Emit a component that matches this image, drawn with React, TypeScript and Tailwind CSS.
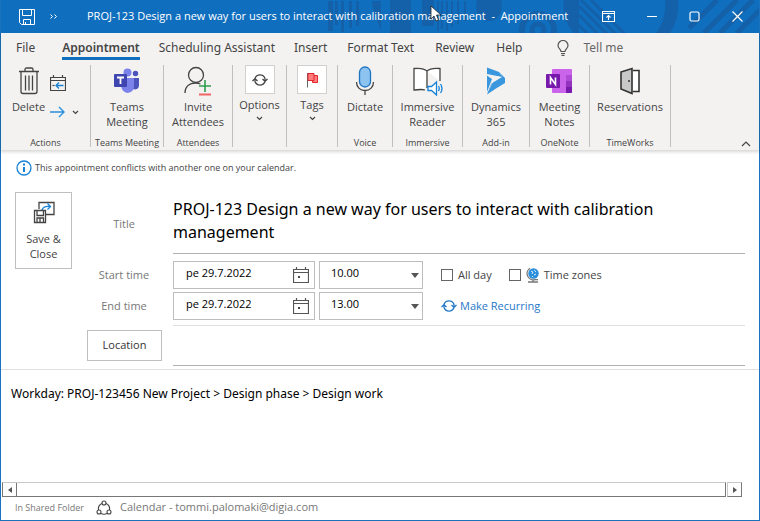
import type { ReactNode } from "react";

const stroke = { fill: "none", stroke: "#444", strokeWidth: 1.3 };

function TitlePattern() {
  return (
    <svg className="absolute right-0 top-0 h-full w-[440px]" viewBox="320 0 440 33" aria-hidden="true">
      <g fill="#1461a9">
        <path d="M329 1h5v30h-5zM336 1h3v24h-3zM342 1h3v31h-3zM350 1h3v27h-3zM357 1h3v25h-3z" />
        <path d="M373 1h9v31c-1-8-9-20-9-31zM391 0h21v33h-21zM423 0h12v26h-12z" />
        <path d="M438 1h2v30h-2zM442 1h2v28h-2zM447 1h2v30h-2zM452 1h2v26h-2zM458 1h2v23h-2zM465 1h2v20h-2z" />
        <path d="M478 0h24c3 12-3 21-12 21s-15-9-12-21z" />
        <path d="M565 0h15v33h-5c-9-9-12-22-10-33zM666 0h13c1 13-2 24-8 33h-14c7-9 10-20 9-33z" />
      </g>
      <g fill="none" stroke="#1461a9">
        <circle cx="539" cy="30" r="16" strokeWidth="6" />
        <circle cx="539" cy="30" r="6" strokeWidth="5" />
        <path d="M580 6l28 28M580 15l18 18M582 0l35 34M592 0l34 34M578 24l10 9" strokeWidth="3" />
        <path d="M690 28l28-28M705 33l33-33M721 33l33-33M738 33l24-24" strokeWidth="5" />
      </g>
    </svg>
  );
}

const TrashIcon = () => (
  <svg width="22" height="28" viewBox="0 0 22 28" {...stroke}>
    <path d="M1 4.500h20M7 4V2.500Q7 1 8.500 1h5Q15 1 15 2.500V4M3 5v19.500q0 2 2 2h12q2 0 2-2V5M7.500 8.500v15M11 8.500v15M14.500 8.500v15" />
  </svg>
);
const CalendarBackIcon = () => (
  <svg width="16" height="18" viewBox="0 0 16 18" fill="none" stroke="#444" strokeWidth="1.200">
    <path d="M.5 3.500h15v13H.5zM.5 6.500h15M3.500 1v3M12.500 1v3" />
    <path d="M2.500 11.500h2" stroke="#444" />
    <path d="M13.500 11.500H6M9 8.500l-3 3 3 3" stroke="#1683d8" strokeWidth="1.300" />
  </svg>
);
const ArrowIcon = () => (
  <svg width="16" height="12" viewBox="0 0 16 12" fill="none" stroke="#2b8fdc" strokeWidth="1.400">
    <path d="M0 6h14M9 1l5 5-5 5" />
  </svg>
);
const Chevron = () => (
  <svg width="7" height="5" viewBox="0 0 7 5" fill="none" stroke="#444" strokeWidth="1.200">
    <path d="M1 1l2.500 2.500L6 1" />
  </svg>
);
const TeamsIcon = () => (
  <svg width="28" height="26" viewBox="0 0 28 26">
    <circle cx="22.500" cy="5.500" r="2.700" fill="#4b53bc" />
    <path d="M18 10h8v7q0 4-4 4.500l-4-1z" fill="#4b53bc" />
    <circle cx="14.500" cy="4.500" r="4" fill="#7b83eb" />
    <path d="M8 10h13v8q0 6-6.500 7Q9 24 8 18z" fill="#7b83eb" />
    <rect x="1" y="6" width="13" height="13" rx="1" fill="#4046b0" />
    <path d="M4 9.500h7M7.500 9.500V16" stroke="#fff" strokeWidth="1.800" />
  </svg>
);
const InviteIcon = () => (
  <svg width="28" height="30" viewBox="0 0 28 30" {...stroke}>
    <circle cx="12" cy="9" r="7.500" />
    <path d="M1 27c0-6 4-10 11-10 2 0 3 .5 4.500 1" />
    <path d="M21 14v12M15 20h12" stroke="#2f9e52" strokeWidth="1.600" />
    <path d="M15 28.500h12" stroke="#f16565" strokeWidth="2" />
  </svg>
);
const CycleIcon = ({ color = "#444" }: { color?: string }) => (
  <svg width="16" height="14" viewBox="0 0 16 14" fill="none" stroke={color} strokeWidth="1.300">
    <path d="M3 5.500A5.300 5.300 0 0 1 13 5.500V8M13 8.500A5.300 5.300 0 0 1 3 8.500V6" />
    <path d="M10.500 6l2.500 2.300L15.500 6M.5 8L3 5.700 5.500 8" />
  </svg>
);
const FlagIcon = () => (
  <svg width="14" height="16" viewBox="0 0 14 16">
    <path d="M2.500 1v14.500" stroke="#666" />
    <path d="M3 1.500h6v7H3zM9 3.500h3.500v7h-5v-2" fill="#ff7d7d" stroke="#e3262d" />
  </svg>
);
const MicIcon = () => (
  <svg width="20" height="30" viewBox="0 0 20 30" {...stroke}>
    <rect x="4.500" y="1" width="11" height="20" rx="5.500" fill="#8cc3f0" stroke="#1f74c2" />
    <path d="M1.500 16c0 5 3.500 8.500 8.500 8.500s8.500-3.500 8.500-8.500M10 24.500V29" />
  </svg>
);
const ReaderIcon = () => (
  <svg width="32" height="30" viewBox="0 0 32 30" {...stroke}>
    <path d="M15 5v17M15 5c-3-3-8-3-13-2.500V24c4-.5 8-1 11 0M15 5c3-3 8-3 13-2.500V15" fill="#fff" />
    <path d="M16 20.500h3.500l5-4.500v13l-5-4.500H16z" fill="#fff" stroke="#1683d8" />
    <path d="M26.500 20q1.500 2.500 0 5M28.500 18q3 4.500 0 9" stroke="#1683d8" />
  </svg>
);
const DynamicsIcon = () => (
  <svg width="20" height="28" viewBox="0 0 20 28" fill="#3a96dd">
    <path d="M1 .5L13 5l3 5L1 7z" />
    <path d="M13 5l6 6v5L10 21.500 1 27.500 5.500 16l4-2 6.500-4z" />
    <path d="M1 8.500l5 3.500L1 25z" />
    <path d="M4 10.500l9.500-1.500L6 16.500 3 24l4-12z" fill="#f3f2f1" />
  </svg>
);
const OneNoteIcon = () => (
  <svg width="28" height="26" viewBox="0 0 28 26">
    <rect x="7" y="1" width="20" height="24" rx="1" fill="#ca64ea" />
    <path d="M21 7h6v6h-6z" fill="#ae4bd5" />
    <path d="M21 13h6v6h-6z" fill="#9332bf" />
    <path d="M21 19h6v5q0 1-1 1h-5z" fill="#7719aa" />
    <rect x="1" y="6" width="14" height="14" rx="1" fill="#7719aa" />
    <path d="M5.500 16.500v-7l5 7v-7" stroke="#fff" strokeWidth="1.600" fill="none" />
  </svg>
);
const DoorIcon = () => (
  <svg width="22" height="28" viewBox="0 0 22 28" fill="none" stroke="#333" strokeWidth="1.600">
    <path d="M14 3.500h6v21h-6" fill="#fff" />
    <path d="M2 5l11-3.500v25L2 22z" fill="#c8c8c8" />
    <circle cx="10" cy="14" r="1" fill="#333" stroke="none" />
  </svg>
);
const BulbIcon = () => (
  <svg width="12" height="16" viewBox="0 0 12 16" fill="none" stroke="#555" strokeWidth="1.200">
    <path d="M4 11.500C4 9 1 8.500 1 5.500a5 5 0 0 1 10 0c0 3-3 3.500-3 6zM4 13.500h4M4.500 15.300h3" />
  </svg>
);
const SaveCloseIcon = () => (
  <svg width="22" height="24" viewBox="0 0 22 24" {...stroke}>
    <path d="M6 9V2.500h15v12h-8" />
    <path d="M9 10c1-3 4-4 8-3.500M14.500 3.500l3 3-3 3" stroke="#1683d8" />
    <path d="M1.500 10.500h11v12h-11z" fill="#fff" />
    <path d="M4 11v4.500h6.500V11M4 22v-4h6.500v4M7 18.500V22" />
  </svg>
);
const DateIcon = () => (
  <svg width="16" height="16" viewBox="0 0 16 16" fill="none" stroke="#555">
    <path d="M.5 2.500h15v13H.5zM.5 5.500h15M3.500 0v3M12.500 0v3" strokeWidth="1.200" />
    <path d="M5 9h2v2H5z" fill="#444" stroke="none" />
  </svg>
);
const GlobeIcon = () => (
  <svg width="14" height="16" viewBox="0 0 14 16" fill="none">
    <circle cx="7.500" cy="6.500" r="5.200" fill="#2b8fdc" />
    <path d="M5 4l2 1-1 2M8 3l2 2M8 8l2-1M6 9l1 1" stroke="#d4ecff" />
    <path d="M4 1.200A6.300 6.300 0 0 0 9 12.600h3M7 12.500V15M2 15h10" stroke="#777" strokeWidth="1.300" />
  </svg>
);
const SharedIcon = () => (
  <svg width="16" height="16" viewBox="0 0 16 16" fill="none" stroke="#444" strokeWidth="1.100">
    <circle cx="8" cy="3" r="2" />
    <circle cx="3" cy="12" r="2" />
    <circle cx="13" cy="12" r="2" />
    <path d="M6 3.500A6 6 0 0 0 2.500 10M10 3.500A6 6 0 0 1 13.500 10M4.800 13.500q3.200 1.500 6.400 0" />
  </svg>
);

function Group({ label, width, children }: { label?: string; width: string; children: ReactNode }) {
  return (
    <section className={`flex shrink-0 flex-col items-center border-r border-[#c1bfbd] ${width}`}>
      <div className="flex flex-1 items-start justify-center">{children}</div>
      <h2 className="h-2 whitespace-nowrap text-[9px] leading-[8px]">{label}</h2>
    </section>
  );
}

function Tool({ icon, children }: { icon: ReactNode; children: ReactNode }) {
  return (
    <button className="flex flex-col items-center text-center leading-[15px]">
      <span className="flex h-[34px] items-center pb-[2px]">{icon}</span>
      {children}
    </button>
  );
}

function Collapsed({ icon, label }: { icon: ReactNode; label: string }) {
  return (
    <button className="flex flex-col items-center leading-[15px]">
      <span className="mb-[3px] flex h-[29px] w-[30px] items-center justify-center border border-[#d2d0ce] bg-white">{icon}</span>
      {label}
      <span className="flex h-[12px] items-center"><Chevron /></span>
    </button>
  );
}

function TimeRow({ label, id, time }: { label: string; id: string; time: string }) {
  return (
    <>
      <label htmlFor={id} className="pl-[3px] text-center text-[#777]">{label}</label>
      <div className="flex gap-1">
        <div className="flex h-[28px] w-[142px] items-center border border-[#bfbdbb] pr-[5px]">
          <input id={id} defaultValue="pe 29.7.2022" className="min-w-0 flex-1 pb-1 pl-[12px] text-black outline-none" />
          <button type="button" aria-label={`Pick ${label.toLowerCase()} date`}><DateIcon /></button>
        </div>
        <div className="relative h-[28px] w-[104px] border border-[#bfbdbb]">
          <select aria-label={`${label} hour`} className="h-full w-full appearance-none pb-1 pl-[11px] text-black outline-none">
            <option>{time}</option>
          </select>
          <svg className="pointer-events-none absolute right-[3px] top-[11px]" width="8" height="5" viewBox="0 0 8 5"><path d="M0 0h8L4 5z" fill="#555" /></svg>
        </div>
      </div>
    </>
  );
}

const tabs = "whitespace-nowrap leading-[18px]";
const check = "size-[12px] appearance-none border border-[#666] bg-white";

export default function App() {
  return (
    <div className="flex min-h-screen flex-col border border-t-0 border-[#1a73bf] bg-white font-['Open_Sans','Noto_Sans',sans-serif] text-[11px] text-[#444]">
      <header className="relative flex h-[33px] items-center bg-[#106ebe] pl-[18px] pr-[16px] text-white">
        <TitlePattern />
        <button aria-label="Save" className="relative mr-[15px]">
          <svg width="16" height="16" viewBox="0 0 16 16" fill="none" stroke="#fff">
            <path d="M.5 .5h15v15h-13l-2-2zM3.500 .5v6h9v-6M4.500 15.500v-5h7v5M6.500 13v2.500" />
          </svg>
        </button>
        <button aria-label="More commands" className="relative mr-[29px]">
          <svg width="8" height="5" viewBox="0 0 8 5" fill="none" stroke="#fff"><path d="M.5 .5l2 2-2 2M4.500 .5l2 2-2 2" /></svg>
        </button>
        <h1 className="relative whitespace-pre">PROJ-123 Design a new way for users to interact with calibration management  -  Appointment</h1>
        <div className="relative ml-auto flex items-center gap-[32px]">
          <button aria-label="Ribbon display options">
            <svg width="13" height="11" viewBox="0 0 13 11" fill="none" stroke="#fff"><path d="M.5 .5h12v10H.5zM.5 2.500h12M6.500 9V4.500M4.500 6.500l2-2 2 2" strokeWidth="1.100" /></svg>
          </button>
          <button aria-label="Minimize"><svg width="10" height="10" viewBox="0 0 10 10" stroke="#fff"><path d="M0 4.500h10" /></svg></button>
          <button aria-label="Maximize"><svg width="11" height="11" viewBox="0 0 11 11" fill="none" stroke="#fff" strokeWidth="1.200"><rect x="1" y="1" width="9" height="9" rx="1.500" /></svg></button>
          <button aria-label="Close"><svg width="11" height="11" viewBox="0 0 11 11" stroke="#fff" strokeWidth="1.200"><path d="M.5 .5l10 10M10.500 .5l-10 10" /></svg></button>
        </div>
        <svg className="pointer-events-none absolute left-[429px] top-[5px]" width="12" height="17" viewBox="0 0 12 17"><path d="M1 1v13l3-3 2 5 2.500-1-2-5H11z" fill="#fff" stroke="#222" strokeWidth=".8" /></svg>
      </header>

      <div className="bg-[#f3f2f1] shadow-[0_1px_3px_1px_rgba(0,0,0,0.16)]">
        <nav className="flex items-start pl-[15px] pt-[6px] font-['Noto_Sans','Open_Sans',sans-serif] text-[12px]">
          <button className={`mr-[27px] ${tabs}`}>File</button>
          <button className={`mr-[19px] border-b-3 border-[#106ebe] font-semibold ${tabs}`}>Appointment</button>
          <button className={`mr-[19px] ${tabs}`}>Scheduling Assistant</button>
          <button className={`mr-[20px] ${tabs}`}>Insert</button>
          <button className={`mr-[21px] ${tabs}`}>Format Text</button>
          <button className={`mr-[22px] ${tabs}`}>Review</button>
          <button className={`mr-[35px] ${tabs}`}>Help</button>
          <button className={`flex items-center gap-[14px] text-[#666] ${tabs}`}><BulbIcon />Tell me</button>
        </nav>
        <div className="flex h-[90px] items-stretch pb-[3px] pt-[5px]">
          <Group label="Actions" width="w-[90px]">
            <div className="flex gap-[5px]">
              <Tool icon={<TrashIcon />}>Delete</Tool>
              <div className="flex flex-col gap-[14px] pt-[9px]">
                <button aria-label="Move to calendar"><CalendarBackIcon /></button>
                <button aria-label="Forward" className="flex items-center gap-[6px]"><ArrowIcon /><Chevron /></button>
              </div>
            </div>
          </Group>
          <Group label="Teams Meeting" width="w-[73px]"><Tool icon={<TeamsIcon />}>Teams<br />Meeting</Tool></Group>
          <Group label="Attendees" width="w-[69px]"><Tool icon={<InviteIcon />}>Invite<br />Attendees</Tool></Group>
          <Group width="w-[54px]"><Collapsed icon={<CycleIcon />} label="Options" /></Group>
          <Group width="w-[51px]"><Collapsed icon={<FlagIcon />} label="Tags" /></Group>
          <Group label="Voice" width="w-[55px]"><Tool icon={<MicIcon />}>Dictate</Tool></Group>
          <Group label="Immersive" width="w-[70px]"><Tool icon={<ReaderIcon />}>Immersive<br />Reader</Tool></Group>
          <Group label="Add-in" width="w-[67px]"><Tool icon={<DynamicsIcon />}>Dynamics<br />365</Tool></Group>
          <Group label="OneNote" width="w-[60px]"><Tool icon={<OneNoteIcon />}>Meeting<br />Notes</Tool></Group>
          <Group label="TimeWorks" width="w-[81px]"><Tool icon={<DoorIcon />}>Reservations</Tool></Group>
          <button aria-label="Collapse ribbon" className="ml-auto mr-[8px] self-end">
            <svg width="10" height="6" viewBox="0 0 10 6" fill="none" stroke="#444" strokeWidth="1.200"><path d="M1 5l4-4 4 4" /></svg>
          </button>
        </div>
      </div>

      <p className="flex items-center gap-[3px] pl-[15px] pt-[10px] text-[9px] leading-[16px]">
        <svg width="16" height="16" viewBox="0 0 16 16" fill="none" stroke="#1683d8"><circle cx="8" cy="8" r="7" strokeWidth="1.300" /><path d="M8 7v5M8 3.500v2" strokeWidth="2" /></svg>
        This appointment conflicts with another one on your calendar.
      </p>

      <form className="flex border-b border-[#e1dfdd] pb-[3px] pl-[14px] pr-[14px] pt-[16px]">
        <button type="button" className="flex h-[77px] w-[57px] shrink-0 flex-col items-center border border-[#c1bfbd] pt-[7px] leading-[15px]">
          <SaveCloseIcon />
          <span className="pt-[7px]">Save &amp;<br />Close</span>
        </button>
        <div className="grid min-w-0 flex-1 grid-cols-[101px_1fr] items-center">
          <label htmlFor="title" className="pb-1 pl-[3px] text-center text-[#777]">Title</label>
          <textarea id="title" rows={2} defaultValue="PROJ-123 Design a new way for users to interact with calibration management" className="mb-[7px] block h-[62px] w-full resize-none border-b border-[#b3b0ad] pr-[60px] pt-[6px] font-['Noto_Sans','Open_Sans',sans-serif] text-[16px] leading-[23px] text-black outline-none" />
          <div className="col-span-2 grid grid-cols-[101px_250px_1fr] items-center gap-y-[3px]">
            <TimeRow label="Start time" id="start" time="10.00" />
            <div className="flex items-center pl-[18px]">
              <input id="allday" type="checkbox" className={check} />
              <label htmlFor="allday" className="pl-[5px] pr-[17px]">All day</label>
              <input id="zones" type="checkbox" className={check} />
              <label htmlFor="zones" className="flex items-center gap-[4px] pl-[5px]"><GlobeIcon />Time zones</label>
            </div>
            <TimeRow label="End time" id="end" time="13.00" />
            <a href="#recurring" className="flex items-center gap-[3px] pl-[18px] text-[#1f78c8]"><CycleIcon color="#1f78c8" />Make Recurring</a>
          </div>
          <button type="button" className="ml-[15px] mt-[5px] h-[31px] w-[75px] border border-[#c1bfbd] text-[#333]">Location</button>
          <input aria-label="Location" className="mt-[5px] h-[41px] w-full border-b border-t border-b-[#b3b0ad] border-t-[#e1dfdd] outline-none" />
        </div>
      </form>

      <textarea aria-label="Notes" defaultValue="Workday: PROJ-123456 New Project > Design phase > Design work" className="min-h-[60px] w-full flex-1 resize-none pl-[10px] pt-[15px] font-['Noto_Sans','Open_Sans',sans-serif] text-[12px] leading-[18px] text-black outline-none" />

      <div className="flex h-[15px] gap-px pl-px pr-[17px]">
        <div className="flex flex-1 border border-[#777] border-t-[#c8c8c8]">
          <button aria-label="Scroll left" className="flex w-[14px] items-center justify-center border-r border-[#777]"><svg width="4" height="6" viewBox="0 0 4 6"><path d="M4 0v6L0 3z" fill="#555" /></svg></button>
        </div>
        <button aria-label="Scroll right" className="flex w-[15px] items-center justify-center border border-[#777] border-l-[#c8c8c8] border-t-[#c8c8c8]"><svg width="4" height="6" viewBox="0 0 4 6"><path d="M0 0v6l4-3z" fill="#555" /></svg></button>
      </div>
      <footer className="flex h-[23px] items-center gap-[8px] pb-[2px] pl-[14px] text-[#777]">
        <span className="w-[73px] whitespace-nowrap text-[9px]">In Shared Folder</span>
        <SharedIcon />
        <span>Calendar - tommi.palomaki@digia.com</span>
      </footer>
    </div>
  );
}
